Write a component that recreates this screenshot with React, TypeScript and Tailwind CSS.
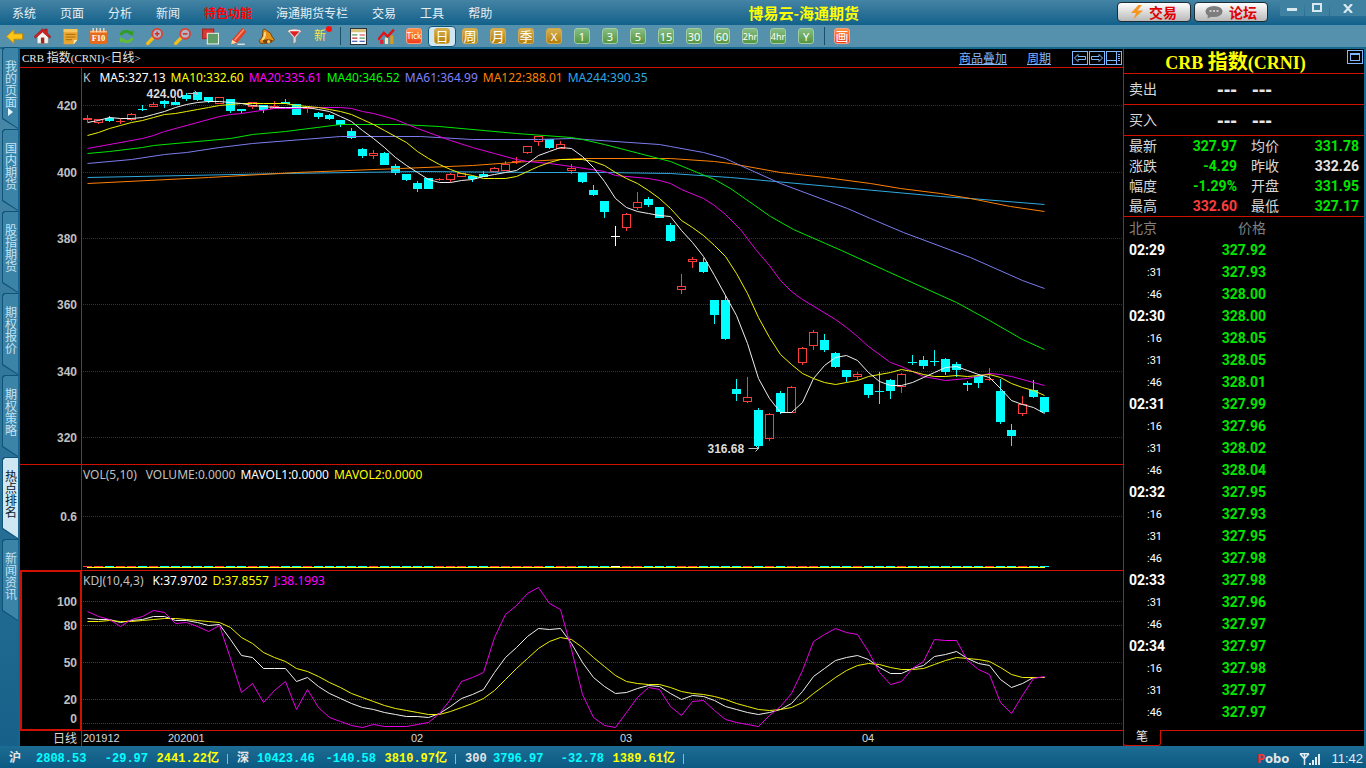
import type { ReactNode } from "react";

const MENUS = ["系统", "页面", "分析", "新闻", "特色功能", "海通期货专栏", "交易", "工具", "帮助"];
const SIDE_TABS = ["我的页面", "国内期货", "股指期货", "期权报价", "期权策略", "热点排名", "新闻资讯"];
const DAY_PERIODS = ["日", "周", "月", "季", "X"];
const MINUTE_PERIODS = ["1", "3", "5", "15", "30", "60", "2hr", "4hr", "Y"];

const RED = "#ff3c3c";
const CYAN = "#00ffff";

const CJK = "font-['Noto_Sans_CJK_SC',sans-serif]";
const LABEL = "font-['Noto_Sans','Noto_Sans_CJK_SC',sans-serif]";
const DIGITS = "font-['Roboto','Noto_Sans_CJK_SC',sans-serif]";
const SERIF = "font-['Liberation_Serif','Noto_Sans_CJK_SC',serif]";

// kind: u hollow up, d solid down, r/c/w cross in red, cyan or white
type Kind = "u" | "d" | "r" | "c" | "w";
// [kind, high, top, bottom, low]
type Candle = [Kind, number, number, number, number];

const CANDLES: Candle[] = [
  ["r", 115, 118, 120, 122], ["u", 119, 119, 123, 124], ["d", 116, 118, 121, 122], ["r", 119, 121, 122, 124],
  ["u", 113, 114, 120, 121], ["c", 105, 109, 110, 111], ["u", 102, 104, 107, 107], ["d", 100, 101, 104, 108],
  ["d", 97, 102, 105, 105], ["d", 93, 95, 99, 101], ["d", 92, 92, 100, 101], ["d", 97, 97, 101, 103],
  ["u", 97, 97, 104, 104], ["d", 99, 99, 111, 113], ["d", 109, 109, 111, 113], ["u", 102, 102, 107, 109],
  ["d", 105, 105, 110, 113], ["u", 101, 106, 109, 109], ["d", 99, 102, 104, 104], ["d", 104, 104, 115, 115],
  ["r", 107, 107, 109, 113], ["d", 112, 113, 117, 119], ["d", 114, 115, 119, 120], ["d", 120, 120, 125, 127],
  ["d", 128, 131, 138, 139], ["d", 148, 149, 156, 158], ["u", 150, 153, 156, 159], ["d", 152, 153, 165, 165],
  ["d", 164, 166, 173, 175], ["d", 174, 174, 180, 181], ["d", 181, 183, 189, 192], ["d", 178, 178, 189, 189],
  ["r", 178, 179, 180, 181], ["u", 173, 174, 180, 182], ["u", 173, 173, 177, 177], ["d", 176, 176, 179, 182],
  ["d", 171, 174, 177, 177], ["u", 167, 168, 172, 172], ["u", 161, 164, 171, 171], ["r", 157, 161, 162, 164],
  ["u", 146, 146, 153, 154], ["u", 136, 136, 142, 146], ["d", 139, 139, 148, 149], ["u", 141, 144, 149, 149],
  ["u", 164, 168, 171, 174], ["d", 172, 172, 182, 183], ["d", 185, 190, 195, 196], ["d", 201, 201, 212, 218],
  ["w", 226, 236, 237, 246], ["u", 213, 214, 228, 231], ["u", 192, 202, 208, 210], ["d", 197, 199, 205, 207],
  ["d", 207, 207, 218, 218], ["d", 223, 225, 241, 242], ["u", 274, 286, 290, 294], ["u", 257, 259, 262, 268],
  ["d", 258, 262, 272, 273], ["d", 300, 300, 315, 324], ["d", 295, 300, 339, 340], ["d", 379, 389, 394, 401],
  ["u", 377, 397, 402, 403], ["d", 408, 410, 446, 449], ["u", 413, 414, 439, 441], ["d", 391, 393, 412, 414],
  ["u", 386, 387, 413, 413], ["u", 347, 348, 363, 365], ["u", 330, 332, 346, 350], ["d", 334, 340, 350, 352],
  ["d", 352, 353, 367, 368], ["d", 370, 370, 377, 382], ["u", 372, 374, 377, 380], ["d", 384, 384, 395, 398],
  ["c", 372, 391, 392, 404], ["d", 379, 380, 391, 399], ["u", 373, 374, 387, 393], ["c", 355, 362, 363, 365],
  ["d", 356, 360, 366, 369], ["c", 350, 361, 362, 366], ["d", 358, 359, 372, 375], ["d", 362, 364, 370, 377],
  ["d", 381, 383, 385, 391], ["d", 374, 376, 383, 388], ["r", 368, 379, 380, 381], ["d", 379, 391, 422, 424],
  ["d", 424, 430, 436, 446], ["u", 396, 404, 414, 416], ["d", 380, 390, 397, 398], ["d", 397, 397, 412, 413],
];

const MA5 = [
  122, 120, 117, 118, 118, 117, 114, 111, 107, 104, 102, 101, 101, 102, 103, 105, 106, 107, 107, 107, 107, 109, 111,
  116, 121, 130, 138, 147, 157, 165, 172, 179, 182, 182, 180, 179, 176, 174, 172, 170, 163, 155, 151, 147, 148, 156,
  167, 181, 198, 207, 211, 213, 215, 216, 230, 242, 256, 275, 295, 315, 343, 378, 398, 412, 412, 402, 378, 365, 357,
  355, 360, 372, 381, 385, 385, 382, 377, 372, 367, 366, 370, 374, 377, 388, 400, 404, 407, 413,
];
const MA10 = [
  135, 132, 128, 125, 122, 120, 117, 114, 113, 111, 109, 107, 105, 104, 103, 103, 103, 103, 103, 105, 106, 107, 109,
  111, 114, 119, 124, 130, 136, 142, 151, 158, 164, 169, 173, 175, 178, 178, 178, 176, 171, 166, 162, 159, 159, 159,
  161, 165, 172, 178, 183, 190, 198, 208, 220, 227, 235, 245, 256, 273, 293, 317, 337, 354, 364, 373, 378, 382, 384,
  382, 380, 376, 374, 372, 369, 371, 374, 376, 376, 375, 376, 375, 374, 377, 383, 387, 390, 395,
];
const MA20 =
  "87,148 142,138 153,135 164,131 219,116 230,114 241,113 274,108 296,108 307,107 340,107 351,108 362,111 373,113 395,119 417,128 450,140 472,147 494,153 516,159 527,161 549,163 571,166 604,171 615,175 648,178 659,180 670,183 681,189 703,198 714,205 725,214 740,229 756,250 769,265 780,280 791,291 802,299 835,319 846,327 857,336 868,346 890,362 901,366 923,376 945,380 967,378 989,373 1000,374 1011,376 1033,382 1044,385";
const MA40 =
  "87,153 109,151 142,147 153,145 230,138 252,134 285,131 340,124 400,124 439,126 516,133 571,137 582,139 604,144 670,161 714,179 730,188 770,216 793,229 825,243 841,250 885,270 956,302 989,320 1022,339 1044,349";
const MA61 =
  "87,163 131,159 164,154 186,152 219,147 252,143 340,136 420,136 472,139 538,139 571,138 659,144 670,146 703,152 725,158 740,165 780,183 847,208 870,218 903,232 970,257 1022,280 1044,288";
const MA122 =
  "87,183 208,177 296,172 400,168 472,165 527,161 560,159 582,158 670,158 714,161 730,163 780,172 825,177 870,183 900,188 940,193 970,198 1010,206 1044,211";
const MA244 = "87,177 285,173 420,171 538,172 604,172 670,173 730,177 830,186 940,196 970,198 1044,204";

const KDJ_K = [
  618, 619, 619, 622, 620, 619, 616, 616, 620, 620, 622, 625, 624, 639, 655, 657, 668, 668, 668, 681, 677, 686, 693,
  698, 703, 707, 709, 712, 714, 716, 716, 717, 713, 706, 698, 694, 689, 672, 657, 647, 636, 628, 629, 628, 643, 662,
  677, 686, 693, 692, 688, 685, 686, 693, 699, 695, 696, 700, 706, 709, 712, 714, 712, 709, 703, 691, 676, 668, 660,
  657, 655, 659, 667, 673, 673, 668, 665, 656, 654, 651, 658, 663, 665, 679, 687, 683, 677, 677,
];
const KDJ_D = [
  621, 621, 620, 621, 621, 620, 619, 618, 618, 619, 620, 621, 622, 627, 637, 643, 652, 657, 661, 668, 671, 676, 682,
  687, 693, 697, 701, 705, 708, 710, 712, 714, 714, 711, 707, 703, 698, 690, 679, 668, 658, 648, 641, 637, 639, 647,
  657, 666, 675, 681, 683, 684, 684, 687, 691, 693, 694, 696, 699, 703, 706, 709, 710, 709, 707, 702, 693, 685, 677,
  670, 665, 663, 664, 667, 669, 669, 668, 664, 660, 657, 658, 659, 661, 667, 674, 677, 677, 677,
];
const KDJ_J = [
  611, 616, 619, 626, 619, 616, 610, 612, 623, 622, 626, 631, 625, 658, 692, 683, 702, 690, 681, 709, 689, 707, 717,
  721, 725, 727, 724, 726, 726, 726, 724, 722, 713, 699, 681, 677, 672, 637, 614, 605, 593, 587, 603, 609, 649, 694,
  717, 725, 727, 712, 697, 687, 689, 706, 715, 701, 700, 710, 719, 722, 724, 726, 715, 706, 693, 670, 641, 634, 628,
  632, 634, 651, 672, 684, 681, 668, 661, 639, 640, 640, 660, 669, 674, 702, 713, 695, 678, 676,
];

const barX = (i: number) => 87 + i * 11;
const polyline = (ys: number[]) => ys.map((y, i) => `${barX(i)},${y}`).join(" ");

const COLORS: Record<Kind, string> = { u: RED, r: RED, d: CYAN, c: CYAN, w: "#ffffff" };

const TICKS: [string, string][] = [
  ["02:29", "327.92"], [":31", "327.93"], [":46", "328.00"],
  ["02:30", "328.00"], [":16", "328.05"], [":31", "328.05"], [":46", "328.01"],
  ["02:31", "327.99"], [":16", "327.96"], [":31", "328.02"], [":46", "328.04"],
  ["02:32", "327.95"], [":16", "327.93"], [":31", "327.95"], [":46", "327.98"],
  ["02:33", "327.98"], [":31", "327.96"], [":46", "327.97"],
  ["02:34", "327.97"], [":16", "327.98"], [":31", "327.97"], [":46", "327.97"],
];

const QUOTES = [
  { label: "最新", value: "327.97", tone: "text-[#00e600]" },
  { label: "均价", value: "331.78", tone: "text-[#00e600]" },
  { label: "涨跌", value: "-4.29", tone: "text-[#00e600]" },
  { label: "昨收", value: "332.26", tone: "text-[#e6e6e6]" },
  { label: "幅度", value: "-1.29%", tone: "text-[#00e600]" },
  { label: "开盘", value: "331.95", tone: "text-[#00e600]" },
  { label: "最高", value: "332.60", tone: "text-[#ff3c3c]" },
  { label: "最低", value: "327.17", tone: "text-[#00e600]" },
];

const INDEXES = [
  { name: "沪", price: "2808.53", change: "-29.97", amount: "2441.22亿", cols: "grid-cols-[27px_51px_61px_71px]" },
  { name: "深", price: "10423.46", change: "-140.58", amount: "3810.97亿", cols: "grid-cols-[20px_57px_62px_71px]" },
  { name: "300", price: "3796.97", change: "-32.78", amount: "1389.61亿", cols: "grid-cols-[28px_50px_61px_71px]" },
];

function Icon({ children }: { children: ReactNode }) {
  return (
    <svg viewBox="0 0 16 16" className="size-[17px]" aria-hidden="true">
      {children}
    </svg>
  );
}

const TOOLS: { name: string; icon: ReactNode }[] = [
  {
    name: "后退",
    icon: <path d="M.5 8 7.5 1.5v4h8v5h-8v4Z" fill="#ffc61a" stroke="#c98a00" strokeWidth=".8" />,
  },
  {
    name: "首页",
    icon: (
      <>
        <path d="M3 8v6.500h10.500V8L8 3Z" fill="#f2f2f2" stroke="#777" strokeWidth=".5" />
        <path d="M0 8.200 8 .8l2 1.800V1h2.400v3.800L16 8.200 14.500 9.500 8 3.800 1.500 9.500Z" fill="#d42020" stroke="#8d1010" strokeWidth=".5" />
        <path d="M6.500 9h3.200v5.500H6.500Z" fill="#9c2b16" />
      </>
    ),
  },
  {
    name: "便笺",
    icon: (
      <>
        <path d="M1.500 1h13v10l-3.500 4.200H1.500Z" fill="#eba531" />
        <path d="M1.500 1h13v3h-13Z" fill="#f8c65c" />
        <path d="M3.500 6h9M3.500 8.500h9M3.500 11h6" stroke="#a86a10" strokeWidth=".9" />
        <path d="m14.500 11-3.500.5v3.700Z" fill="#fff0b8" />
      </>
    ),
  },
  {
    name: "F10资料",
    icon: (
      <>
        <rect y="2" width="16" height="13" rx="1.500" fill="#e56a1c" />
        <path d="M0 3.500h16" stroke="#ffb87c" strokeWidth="1.500" />
        <path d="M3 0v4M6.300 0v4M9.600 0v4M13 0v4" stroke="#f4e3cf" strokeWidth="1.200" />
        <text x="8" y="12.500" textAnchor="middle" fontFamily="Liberation Serif, serif" fontWeight="700" fontSize="8" fill="#fff">F10</text>
      </>
    ),
  },
  {
    name: "刷新",
    icon: (
      <>
        <path d="M2.500 6.500Q4 2.800 8.500 3.200q2.500.3 3.800 1.700" fill="none" stroke="#2f9e22" strokeWidth="2.600" />
        <path d="m14.500 2-.4 5.200-4.800-1.800Z" fill="#2f9e22" />
        <path d="M13.500 9.500Q12 13.200 7.500 12.800q-2.500-.3-3.800-1.700" fill="none" stroke="#62bd35" strokeWidth="2.600" />
        <path d="m1.500 14 .4-5.200 4.800 1.800Z" fill="#62bd35" />
      </>
    ),
  },
  {
    name: "放大",
    icon: (
      <>
        <path d="m6.500 9.500-4.800 5" stroke="#f5bd1a" strokeWidth="3.200" strokeLinecap="round" />
        <circle cx="10.500" cy="5.500" r="4.600" fill="#b6b4c6" stroke="#e0402e" strokeWidth="1.700" />
        <path d="M8.300 5.500h4.400M10.500 3.300v4.400" stroke="#c93025" strokeWidth="1.400" />
      </>
    ),
  },
  {
    name: "缩小",
    icon: (
      <>
        <path d="m6.500 9.500-4.800 5" stroke="#f5bd1a" strokeWidth="3.200" strokeLinecap="round" />
        <circle cx="10.500" cy="5.500" r="4.600" fill="#b6b4c6" stroke="#e0402e" strokeWidth="1.700" />
        <path d="M8.300 5.500h4.400" stroke="#c93025" strokeWidth="1.400" />
      </>
    ),
  },
  {
    name: "叠加",
    icon: (
      <>
        <rect x=".5" y="1" width="10.500" height="9" fill="#d63a35" stroke="#a52320" />
        <rect x="5" y="5" width="10.500" height="10" fill="#5f9c66" stroke="#e4efe4" />
      </>
    ),
  },
  {
    name: "画线",
    icon: (
      <>
        <path d="M2 11 11.500 0l4 3.300L6.500 14l-4.500 1Z" fill="#e34026" />
        <path d="m4.300 11.500 8.700-10" stroke="#ff9a80" strokeWidth="1.300" />
        <path d="m2 11-.9 4.200 5.200-1.400Z" fill="#ffd9a0" />
        <path d="M7 15.300h7" stroke="#e8e8e8" strokeWidth="1.200" />
      </>
    ),
  },
  {
    name: "预警",
    icon: (
      <>
        <path d="M5 1.500Q7 0 8.200 2.500q4.300 1.500 5.300 6l2 2.500q-4 3.800-13 3.500L1 12Q5.500 8.500 4.500 4.500 4.200 2.500 5 1.500Z" fill="#e59016" stroke="#6d3606" strokeWidth=".8" />
        <path d="M6.500 4q.5 4-2.500 7.500" stroke="#ffdb79" strokeWidth="1.800" fill="none" />
        <ellipse cx="9" cy="12.500" rx="4.500" ry="1.800" fill="#7b3f08" />
        <circle cx="10" cy="12.800" r="1.500" fill="#ffc84b" />
      </>
    ),
  },
  {
    name: "过滤",
    icon: (
      <>
        <path d="M1.500 3 6.700 9v6l2.800-1.500V9L14.500 3Z" fill="#d4d8dc" stroke="#72777c" strokeWidth=".6" />
        <ellipse cx="8" cy="3" rx="6.500" ry="2" fill="#f2f2f2" stroke="#72777c" strokeWidth=".6" />
        <path d="M3.500 3h9L8 8.500Z" fill="#e02020" />
      </>
    ),
  },
];

function Separator() {
  return (
    <span className="flex w-2 justify-center">
      <span className="h-[18px] w-px bg-[#1c4f69]" />
    </span>
  );
}

function Badge({ text, tone }: { text: string; tone: string }) {
  const size = text.length > 3 ? "text-[8px]" : text.length > 2 ? "text-[9px]" : /[0-9XY]/.test(text) ? "text-[11px]" : "text-[13px]";
  return (
    <span
      className={`flex size-4 items-center justify-center rounded-[3px] border bg-linear-to-b leading-none text-white ${size} ${tone}`}
    >
      {text}
    </span>
  );
}

const GOLD = "border-[#cfa850] from-[#d6b04c] to-[#b47f00]";
const GREEN = "border-[#a3cba0] from-[#85bd84] to-[#55973f]";
const ORANGE = "border-[#ffa07a] from-[#ff9040] to-[#ee3a1c]";

function Toolbar() {
  return (
    <div className={`flex h-6 items-center border-b-2 border-[#17698f] bg-[#5590ac] ${LABEL}`}>
      {TOOLS.map((tool) => (
        <button key={tool.name} aria-label={tool.name} className="flex h-5 w-7 items-center justify-center">
          <Icon>{tool.icon}</Icon>
        </button>
      ))}
      <button className="relative h-5 w-6 text-center text-[12px] leading-5 text-[#ffe24d]">
        新
        <span className="absolute top-0 right-0 size-[6px] rounded-full bg-[#ff1010]" />
      </button>
      <span className="w-1" />
      <Separator />
      <button aria-label="报价" className="flex h-5 w-7 items-center justify-center">
        <Icon>
          <path d="M.5.500h15v15H.5Z" fill="#fff" stroke="#27323a" />
          <path d="M1 1h14v3H1Z" fill="#d9c37a" />
          <path d="M2 6.500h5" stroke="#3a8a3a" />
          <path d="M9 6.500h5M2 9.500h5" stroke="#c33" />
          <path d="M9 9.500h5" stroke="#3a8a3a" />
          <path d="M2 12.500h5M9 12.500h5" stroke="#223a9a" />
        </Icon>
      </button>
      <button aria-label="走势" className="flex h-5 w-7 items-center justify-center">
        <Icon>
          <path d="M2 15v-4h3v4Z" fill="#d23" />
          <path d="M6.500 15v-6h3v6Z" fill="#f6e7b0" />
          <path d="M11.500 15V7h3v8Z" fill="#d99b22" />
          <path d="M0 11 5.500 4.500 9 8l6-6.500" fill="none" stroke="#e01414" strokeWidth="2.200" />
        </Icon>
      </button>
      <button className="flex h-5 w-7 items-center justify-center">
        <Badge text="Tick" tone={ORANGE} />
      </button>
      {DAY_PERIODS.map((period) => (
        <button
          key={period}
          aria-pressed={period === "日"}
          className="flex h-[21px] w-7 items-center justify-center rounded-sm border border-transparent aria-pressed:border-[#0e5578] aria-pressed:bg-[#cfe6f3]"
        >
          <Badge text={period} tone={GOLD} />
        </button>
      ))}
      {MINUTE_PERIODS.map((period) => (
        <button key={period} className="flex h-5 w-7 items-center justify-center">
          <Badge text={period} tone={GREEN} />
        </button>
      ))}
      <Separator />
      <button className="flex h-5 w-7 items-center justify-center">
        <Badge text="画" tone={ORANGE} />
      </button>
    </div>
  );
}

const PILL =
  "flex h-5 w-[74px] items-center justify-center gap-1.5 rounded-sm border border-[#1d2b33] bg-linear-to-b from-white to-[#b9b9b9] text-[14px] leading-none font-bold text-[#e00000]";

function TitleBar() {
  return (
    <header className={`flex h-[25px] items-start bg-linear-to-b from-[#4484a4] to-[#0f618b] ${CJK}`}>
      <nav className="flex h-[25px] flex-3 items-center gap-6 pl-3 text-[12px] text-[#e6eff4]">
        {MENUS.map((menu) => (
          <button key={menu} className={`whitespace-nowrap ${menu === "特色功能" ? "font-bold text-[#ff0000]" : ""}`}>
            {menu}
          </button>
        ))}
      </nav>
      <h1 className="h-[25px] pr-4 text-[15px] leading-[25px] font-bold whitespace-nowrap text-[#ffff00]">博易云-海通期货</h1>
      <div className="flex flex-2 justify-end">
        <div className="mt-0.5 mr-3 flex gap-[3px]">
          <button className={PILL}>
            <svg viewBox="0 0 12 14" className="h-3.5 w-3" aria-hidden="true">
              <path d="M7.500 0 0 8h5l-2.500 6L12 5.500H6.500L11 0Z" fill="#f5961e" />
            </svg>
            交易
          </button>
          <button className={PILL}>
            <svg viewBox="0 0 18 14" className="h-3.5 w-[18px]" aria-hidden="true">
              <ellipse cx="9" cy="6.500" rx="8.500" ry="5.500" fill="#7d7d7d" />
              <path d="m3 9-.5 4.500L8 11Z" fill="#7d7d7d" />
              <path d="M4.500 6h2M8 6h2M11.500 6h2" stroke="#e6e6e6" strokeWidth="1.600" />
            </svg>
            论坛
          </button>
        </div>
        <div className="flex gap-px">
          <button aria-label="最小化" className="flex h-4 w-6 justify-center bg-[#3f81a1]">
            <span className="mt-2 h-[3px] w-2.5 bg-[#d9e8ef]" />
          </button>
          <button aria-label="最大化" className="flex h-4 w-6 justify-center bg-[#3f81a1]">
            <span className="mt-[3px] h-[9px] w-2.5 border-2 border-[#d9e8ef]" />
          </button>
          <button aria-label="关闭" className="flex h-4 w-9 items-center justify-center bg-[#3f81a1]">
            <svg viewBox="0 0 10 9" className="h-[9px] w-2.5" aria-hidden="true">
              <path d="m1 0 8 9M9 0 1 9" stroke="#d9e8ef" strokeWidth="2.200" />
            </svg>
          </button>
        </div>
      </div>
    </header>
  );
}

function SideTabs() {
  return (
    <nav className={`flex w-5 shrink-0 flex-col border-r-2 border-[#17658e] bg-linear-to-b from-[#4c8aaa] via-[#2f769b] to-[#16618a] pl-0.5 ${CJK}`}>
      {SIDE_TABS.map((tab) => {
        const active = tab === "热点排名";
        return (
          <button
            key={tab}
            className="flex h-[82px] w-4 bg-[#0f5378] pt-px pl-px [clip-path:polygon(2px_0,100%_0,100%_100%,0_72px,0_2px)] first:-mt-0.5"
          >
            <span
              className={`flex h-20 w-full flex-col items-center pt-3 text-[12px] leading-3 [clip-path:polygon(2px_0,100%_0,100%_100%,0_70px,0_2px)] ${
                active ? "bg-[#cfe6f3] text-[#06222f]" : "bg-[#3c83a8] text-[#c2e4f4]"
              }`}
            >
              <span className="[writing-mode:vertical-rl]">{tab}</span>
              {tab === "我的页面" && (
                <svg viewBox="0 0 5 8" className="h-2 w-[5px]" aria-hidden="true">
                  <path d="m0 0 5 4-5 4Z" fill="#e6f6ff" />
                </svg>
              )}
            </span>
          </button>
        );
      })}
    </nav>
  );
}

function Grid({ rows, top, color = "#8c0f00" }: { rows: number[]; top: number; color?: string }) {
  return (
    <>
      {rows.map((y) => (
        <line key={y} x1="1" x2="100%" y1={y - top + 0.5} y2={y - top + 0.5} stroke={color} strokeDasharray="1 1" />
      ))}
    </>
  );
}

function Axis({ labels, top, boxed = false }: { labels: [string, number][]; top: number; boxed?: boolean }) {
  return (
    <div className={`w-[62px] shrink-0 border-[#d01000] ${boxed ? "border-x-2 border-y" : "border-r"}`}>
      <svg className={`h-full overflow-visible ${boxed ? "w-[58px]" : "w-[61px]"}`}>
        {labels.map(([text, y]) => (
          <text
            key={text}
            x={boxed ? 55 : 57}
            y={y - top + 5}
            textAnchor="end"
            fontFamily="Liberation Sans, sans-serif"
            fontSize="12"
            fontWeight="700"
            fill="#c0c0c0"
          >
            {text}
          </text>
        ))}
      </svg>
    </div>
  );
}

function Legend({ items }: { items: [string, string][] }) {
  return (
    <p className={`flex h-[18px] shrink-0 items-center gap-[5px] pt-0.5 pl-px text-[12px] leading-none whitespace-nowrap ${LABEL}`}>
      {items.map(([text, tone]) => (
        <span key={text} className={`first:mr-1 ${tone}`}>
          {text}
        </span>
      ))}
    </p>
  );
}

function Bar({ candle, index }: { candle: Candle; index: number }) {
  const [kind, high, top, bottom, low] = candle;
  const x = barX(index);
  const color = COLORS[kind];
  if (kind === "u") {
    return (
      <g fill={color}>
        <rect x={x} y={high} width="1" height={Math.max(top - high, 0)} />
        <rect x={x} y={bottom} width="1" height={Math.max(low - bottom, 0)} />
        <rect x={x - 4 + 0.5} y={top + 0.5} width="8" height={bottom - top - 1} fill="none" stroke={color} />
      </g>
    );
  }
  return (
    <g fill={color}>
      <rect x={x} y={high} width="1" height={low - high} />
      <rect x={x - 4} y={top} width="9" height={bottom - top} />
    </g>
  );
}

function Line({ points, color }: { points: string; color: string }) {
  return <polyline points={points} fill="none" stroke={color} />;
}

function Callout({ x, y, text, length }: { x: number; y: number; text: string; length: number }) {
  return (
    <>
      <text x={x} y={y + 4} fontFamily="Liberation Sans, sans-serif" fontSize="12" fontWeight="700" fill="#dcdcdc">
        {text}
      </text>
      <path d={`M${x + 41} ${y}h${length}m-3 -3 3 3-3 3`} fill="none" stroke="#c0c0c0" />
    </>
  );
}

// Series are kept in chart-space pixels, so each pane shifts them to its own origin.
function PricePane() {
  return (
    <section className="flex h-[397px] border-b border-[#d01000]">
      <Axis top={68} labels={[["420", 105], ["400", 172], ["380", 238], ["360", 304], ["340", 371], ["320", 437]]} />
      <div className="flex min-w-0 flex-1 flex-col">
        <Legend
          items={[
            ["K", "text-[#c0c0c0]"],
            ["MA5:327.13", "text-white"],
            ["MA10:332.60", "text-[#ffff00]"],
            ["MA20:335.61", "text-[#ff00ff]"],
            ["MA40:346.52", "text-[#00ff00]"],
            ["MA61:364.99", "text-[#8080ff]"],
            ["MA122:388.01", "text-[#ff8000]"],
            ["MA244:390.35", "text-[#2fa8e0]"],
          ]}
        />
        <svg className="min-h-0 w-full flex-1" role="img" aria-label="K线图">
          <Grid top={86} rows={[105, 172, 238, 304, 371, 437]} />
          <g transform="translate(-82 -86)">
            {CANDLES.map((candle, i) => (
              <Bar key={i} candle={candle} index={i} />
            ))}
            <g transform="translate(.5 .5)">
              <Line points={MA244} color="#2fa8e0" />
              <Line points={MA122} color="#ff8000" />
              <Line points={MA61} color="#7c7cf0" />
              <Line points={MA40} color="#00e600" />
              <Line points={MA20} color="#e000e0" />
              <Line points={polyline(MA10)} color="#f0f000" />
              <Line points={polyline(MA5)} color="#f0f0f0" />
              <Callout x={146} y={93} text="424.00" length={10} />
              <Callout x={707} y={448} text="316.68" length={10} />
            </g>
          </g>
        </svg>
      </div>
    </section>
  );
}

function VolumePane() {
  return (
    <section className="flex h-[106px] border-b border-[#d01000]">
      <Axis top={465} labels={[["0.6", 516]]} />
      <div className="flex min-w-0 flex-1 flex-col">
        <Legend
          items={[
            ["VOL(5,10)", "text-[#c0c0c0]"],
            ["VOLUME:0.0000", "text-[#c0c0c0]"],
            ["MAVOL1:0.0000", "text-white"],
            ["MAVOL2:0.0000", "text-[#ffff00]"],
          ]}
        />
        <svg className="min-h-0 w-full flex-1" role="img" aria-label="成交量">
          <Grid top={483} rows={[516]} />
          <g transform="translate(-82 -483)">
            {CANDLES.map(([kind], i) => (
              <rect key={i} x={barX(i) - 4} y="566" width="9" height="1" fill={COLORS[kind]} />
            ))}
            <rect x="87" y="567" width="958" height="1" fill="#ffff00" />
          </g>
        </svg>
      </div>
    </section>
  );
}

function KdjPane() {
  return (
    <section className="flex h-40 border-b border-[#d01000]">
      <Axis boxed top={572} labels={[["100", 601], ["80", 625], ["50", 662], ["20", 699], ["0", 718]]} />
      <div className="flex min-w-0 flex-1 flex-col">
        <Legend
          items={[
            ["KDJ(10,4,3)", "text-[#c0c0c0]"],
            ["K:37.9702", "text-white"],
            ["D:37.8557", "text-[#ffff00]"],
            ["J:38.1993", "text-[#ff00ff]"],
          ]}
        />
        <svg className="min-h-0 w-full flex-1 overflow-visible" role="img" aria-label="KDJ">
          <Grid top={589} rows={[601, 625, 662, 699, 723]} color="#b01400" />
          <g transform="translate(-81.5 -588.5)">
            <Line points={polyline(KDJ_K)} color="#f0f0f0" />
            <Line points={polyline(KDJ_D)} color="#f0f000" />
            <Line points={polyline(KDJ_J)} color="#e600e6" />
          </g>
        </svg>
      </div>
    </section>
  );
}

function TimeAxis() {
  const labels: [string, number][] = [["201912", 1], ["202001", 86], ["02", 329], ["03", 538], ["04", 780]];
  return (
    <div className="flex h-[15px]">
      <span className={`w-[62px] shrink-0 border-r border-[#d01000] pr-1 text-right text-[12px] leading-[14px] text-[#d8d8d8] ${CJK}`}>
        日线
      </span>
      <svg className="h-[15px] min-w-0 flex-1">
        {labels.map(([text, x]) => (
          <text key={text} x={x} y="11" fontFamily="Liberation Sans, sans-serif" fontSize="11" fill="#d8d8d8">
            {text}
          </text>
        ))}
      </svg>
    </div>
  );
}

function ChartHeader() {
  return (
    <div className="flex h-[19px] items-center border-b border-[#d01000] pr-px pl-0.5 text-[12px] leading-none text-[#e6e6e6]">
      <h2 className={`flex-1 text-[11px] ${SERIF}`}>
        CRB <span className="text-[12px]">指数</span>(CRNI)&lt;<span className="text-[12px]">日线</span>&gt;
      </h2>
      <div className={`flex items-center text-[#80b8ff] ${CJK}`}>
        <a href="#overlay" className="mr-5 underline">
          商品叠加
        </a>
        <a href="#period" className="mr-[21px] underline">
          周期
        </a>
        <button aria-label="左移" className="mr-px border border-[#80b8ff]">
          <svg viewBox="0 0 14 12" className="h-3 w-3.5" aria-hidden="true">
            <path d="M1.500 6 5 2.500v2h7.500v3H5v2Z" fill="none" stroke="#80b8ff" />
          </svg>
        </button>
        <button aria-label="右移" className="mr-px border border-[#80b8ff]">
          <svg viewBox="0 0 14 12" className="h-3 w-3.5" aria-hidden="true">
            <path d="M12.500 6 9 2.500v2H1.500v3H9v2Z" fill="none" stroke="#80b8ff" />
          </svg>
        </button>
        <button aria-label="布局" className="border border-[#80b8ff]">
          <svg viewBox="0 0 14 12" className="h-3 w-3.5" aria-hidden="true">
            <path d="M0 8.500h9.500M9.500 0v12M11 2.500h2M11 4.500h2M11 6.500h2M11 8.500h2" fill="none" stroke="#80b8ff" />
          </svg>
        </button>
      </div>
    </div>
  );
}

function DepthRow({ label }: { label: string }) {
  return (
    <div className="flex h-[31px] items-center border-b border-[#d01000] pl-[5px]">
      <span className="w-[88px] text-[14px] text-[#d8d8d8]">{label}</span>
      <span className="w-[35px] font-['Liberation_Sans',sans-serif] text-[20px] leading-none font-bold text-[#e6e6e6]">---</span>
      <span className="font-['Liberation_Sans',sans-serif] text-[20px] leading-none font-bold text-[#e6e6e6]">---</span>
    </div>
  );
}

function QuotePanel() {
  return (
    <aside className={`flex w-[241px] shrink-0 flex-col border-l border-[#d01000] ${DIGITS}`}>
      <div className="flex h-[25px] border-b border-[#d01000]">
        <h2 className={`flex-1 text-center text-[18px] leading-7 font-bold text-[#ffff00] ${SERIF}`}>
          CRB <span className="text-[20px] leading-none">指数</span>(CRNI)
        </h2>
        <button aria-label="展开" className="mt-px mr-px flex h-3.5 w-4 items-center justify-center border border-[#80b8ff]">
          <span className="h-2 w-2.5 border border-t-2 border-[#80b8ff]" />
        </button>
      </div>
      <DepthRow label="卖出" />
      <DepthRow label="买入" />
      <dl className="grid grid-cols-2 gap-x-[14px] border-b border-[#d01000] pr-[5px] pl-[5px]">
        {QUOTES.map((quote) => (
          <div key={quote.label} className="flex h-5 items-center justify-between text-[14px] leading-none">
            <dt className="text-[#d8d8d8]">{quote.label}</dt>
            <dd className={`font-bold ${quote.tone}`}>{quote.value}</dd>
          </div>
        ))}
      </dl>
      <table className="w-full table-fixed text-[14px]">
        <colgroup>
          <col className="w-[39px]" />
          <col className="w-[103px]" />
          <col />
        </colgroup>
        <thead>
          <tr className="h-[22px] leading-none text-[#808080]">
            <th className="p-0 pl-[5px] text-left font-normal whitespace-nowrap">北京</th>
            <th className="p-0 text-right font-normal">价格</th>
            <th className="p-0" />
          </tr>
        </thead>
        <tbody>
          {TICKS.map(([time, price], i) => (
            <tr key={i} className="h-[22px] leading-none">
              <td
                className={`p-0 text-right text-white ${
                  time.startsWith(":") ? "pr-px text-[11px]" : "pl-[5px] font-bold whitespace-nowrap"
                }`}
              >
                {time}
              </td>
              <td className="p-0 text-right font-bold text-[#00e600]">{price}</td>
              <td className="p-0" />
            </tr>
          ))}
        </tbody>
      </table>
      <div className="mt-auto flex h-4">
        <button className="-ml-px w-[38px] rounded-b-[3px] border border-t-0 border-[#d01000] text-center text-[12px] leading-[15px] text-[#e6e6e6]">
          笔
        </button>
        <span className="flex-1 border-t border-[#d01000]" />
      </div>
    </aside>
  );
}

function StatusBar() {
  return (
    <footer className="flex h-[22px] items-center bg-linear-to-b from-[#1d6c93] to-[#0b5a83] pt-[3px] pl-[9px] font-['Liberation_Mono','Noto_Sans_CJK_SC',monospace] text-[12px] leading-none font-bold">
      {INDEXES.map((item) => (
        <div key={item.name} className="flex items-center">
          <div className={`grid items-center ${item.cols}`}>
            <span className="text-[#e6e6e6]">{item.name}</span>
            <span className="text-[#00ffff]">{item.price}</span>
            <span className="text-right text-[#00ffff]">{item.change}</span>
            <span className="text-right text-[#ffff00]">{item.amount}</span>
          </div>
          <span className="mr-[9px] ml-2 h-[10px] w-px bg-[#7fb9dc]" />
        </div>
      ))}
      <span className="ml-auto font-['Noto_Sans',sans-serif] text-[13px] text-[#e6e6e6]">
        <span className="text-[#ff3030]">P</span>obo
      </span>
      <svg viewBox="0 0 22 12" className="mx-[10px] h-3 w-[22px]" aria-hidden="true">
        <path d="M1 .8h9M1 .8l4.500 5 4.500-5M5.500 1v11" fill="none" stroke="#e0edf4" strokeWidth="1.500" />
        <path d="M10 10h2v2h-2ZM13 7h2v5h-2ZM16 4h2v8h-2ZM19 1h2v11h-2Z" fill="#e0edf4" />
      </svg>
      <time className="mr-[3px] font-['Liberation_Sans',sans-serif] text-[13px] font-normal text-[#e0edf4]">11:42</time>
    </footer>
  );
}

export default function App() {
  return (
    <div className="flex min-h-screen min-w-[1200px] flex-col bg-[#17698f]">
      <TitleBar />
      <Toolbar />
      <div className="flex flex-1">
        <SideTabs />
        <main className="flex min-w-0 flex-1 bg-black">
          <div className="min-w-0 flex-1">
            <ChartHeader />
            <PricePane />
            <VolumePane />
            <KdjPane />
            <TimeAxis />
          </div>
          <QuotePanel />
        </main>
        <div className="w-0.5" />
      </div>
      <StatusBar />
    </div>
  );
}
